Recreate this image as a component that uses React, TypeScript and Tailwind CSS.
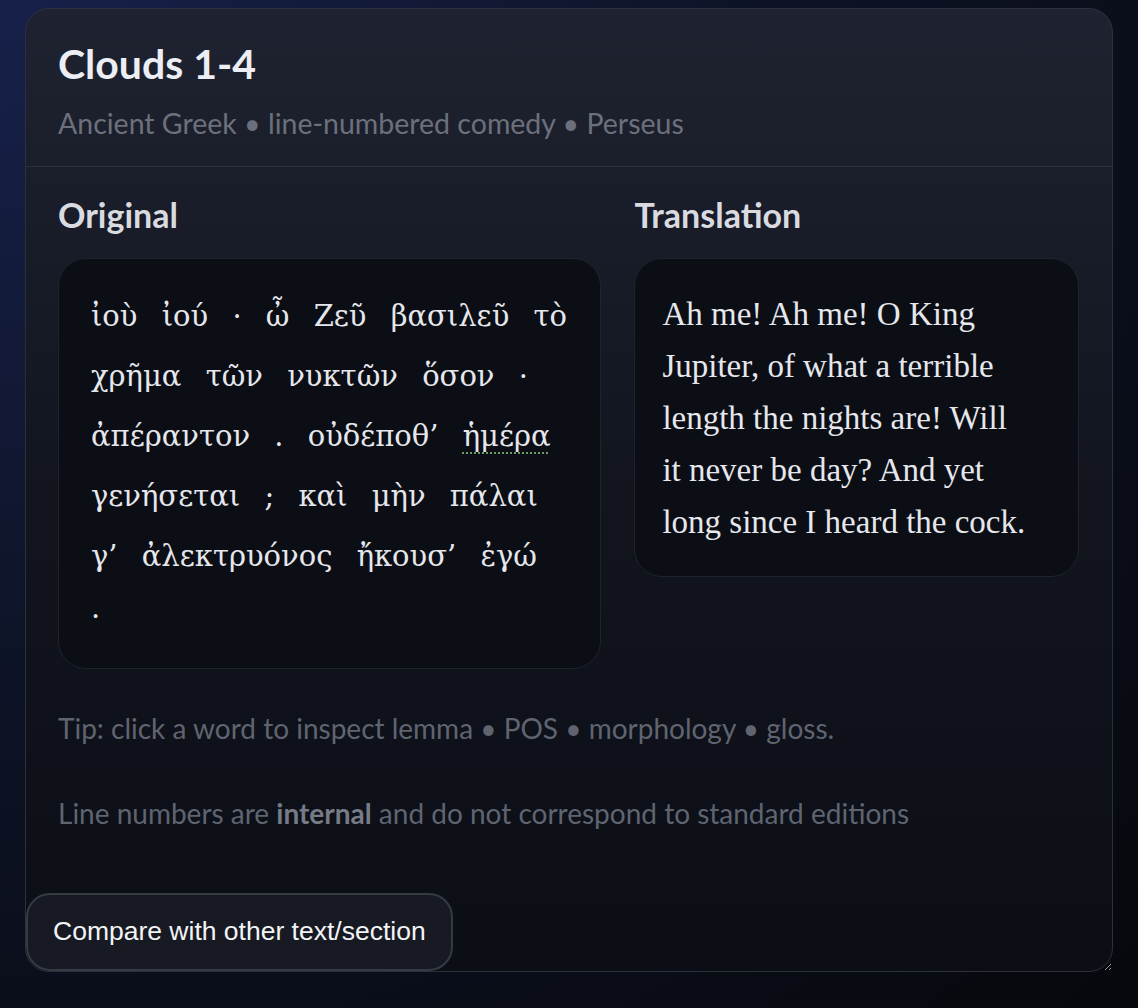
import React from "react";

type W = { t: string; mark?: boolean };
const lines: W[][] = [
  [{ t: "ἰοὺ" }, { t: "ἰού" }, { t: "·" }, { t: "ὦ" }, { t: "Ζεῦ" }, { t: "βασιλεῦ" }, { t: "τὸ" }],
  [{ t: "χρῆμα" }, { t: "τῶν" }, { t: "νυκτῶν" }, { t: "ὅσον" }, { t: "·" }],
  [{ t: "ἀπέραντον" }, { t: "." }, { t: "οὐδέποθ’" }, { t: "ἡμέρα", mark: true }],
  [{ t: "γενήσεται" }, { t: ";" }, { t: "καὶ" }, { t: "μὴν" }, { t: "πάλαι" }],
  [{ t: "γ’" }, { t: "ἀλεκτρυόνος" }, { t: "ἤκουσ’" }, { t: "ἐγώ" }],
  [{ t: "·" }],
];

export default function App() {
  return (
    <div className="min-h-screen w-full bg-[radial-gradient(ellipse_at_top_left,#17214a_0%,#0e1428_45%,#07080c_100%)] px-[25px] pb-[36px] pt-[8px] font-['Lato',sans-serif]">
      <div className="flex h-[964px] resize flex-col overflow-auto rounded-[24px] border border-[#2c303b] bg-gradient-to-b from-[#1f2331] via-[#12151e] to-[#0b0e15]">
        <header className="border-b border-[#2e323d] pl-[32px] pr-[33px] pb-[25px] pt-[33px]">
          <h1 className="text-[41px] font-bold leading-[44px] text-[#eceef3]">Clouds 1-4</h1>
          <p className="mt-[19px] text-[28.5px] leading-[36px] text-[#6c707c]">
            Ancient Greek • line-numbered comedy • Perseus
          </p>
        </header>

        <section className="pl-[32px] pr-[33px] pt-[30px]">
          <div className="grid grid-cols-[11fr_9fr] items-start gap-[33px]">
            <div>
              <h2 className="mb-[25px] text-[34px] font-bold leading-[36px] text-[#d9dbe0]">Original</h2>
              <div className="rounded-[28px] border border-[#1f232c] bg-[#0b0e15] pb-[22px] pl-[32px] pr-[32px] pt-[27px]">
                <p className="font-['DejaVu_Serif',serif] text-[29px] leading-[60px] text-[#e6e7ec] [word-spacing:15px]">
                  {lines.map((line, li) => (
                    <span key={li} className="block whitespace-nowrap">
                      {line.map((w, i) => (
                        <React.Fragment key={i}>
                          {w.mark ? (
                            <span className="underline decoration-[#6f9a62] decoration-dotted decoration-2 underline-offset-[6px]">
                              {w.t}
                            </span>
                          ) : (
                            <span>{w.t}</span>
                          )}
                          {i < line.length - 1 ? " " : ""}
                        </React.Fragment>
                      ))}
                    </span>
                  ))}
                </p>
              </div>
            </div>
            <div>
              <h2 className="mb-[25px] text-[34px] font-bold leading-[36px] text-[#d9dbe0]">Translation</h2>
              <div className="rounded-[28px] border border-[#1f232c] bg-[#0b0e15] pb-[28px] pl-[27px] pr-[45px] pt-[29px]">
                <p className="font-['Liberation_Serif',serif] text-[33px] leading-[52px] text-[#e6e7ec]">
                  Ah me! Ah me! O King Jupiter, of what a terrible length the nights are! Will it never be
                  day? And yet long since I heard the cock.
                </p>
              </div>
            </div>
          </div>

          <p className="mt-[43px] text-[28px] leading-[32px] text-[#5f6470]">
            Tip: click a word to inspect lemma • POS • morphology • gloss.
          </p>
          <p className="mt-[53px] text-[28px] leading-[32px] text-[#5f6470]">
            Line numbers are <strong className="font-bold text-[#767b86]">internal</strong> and do not correspond to
            standard editions
          </p>
        </section>

        <div className="mt-auto flex">
          <button className="h-[78px] rounded-[24px] border-2 border-[#363a45] bg-[#171a22] px-[25px] font-['Liberation_Sans',Arial,sans-serif] text-[26.5px] text-[#f3f4f6]">
            Compare with other text/section
          </button>
        </div>
      </div>
    </div>
  );
}
